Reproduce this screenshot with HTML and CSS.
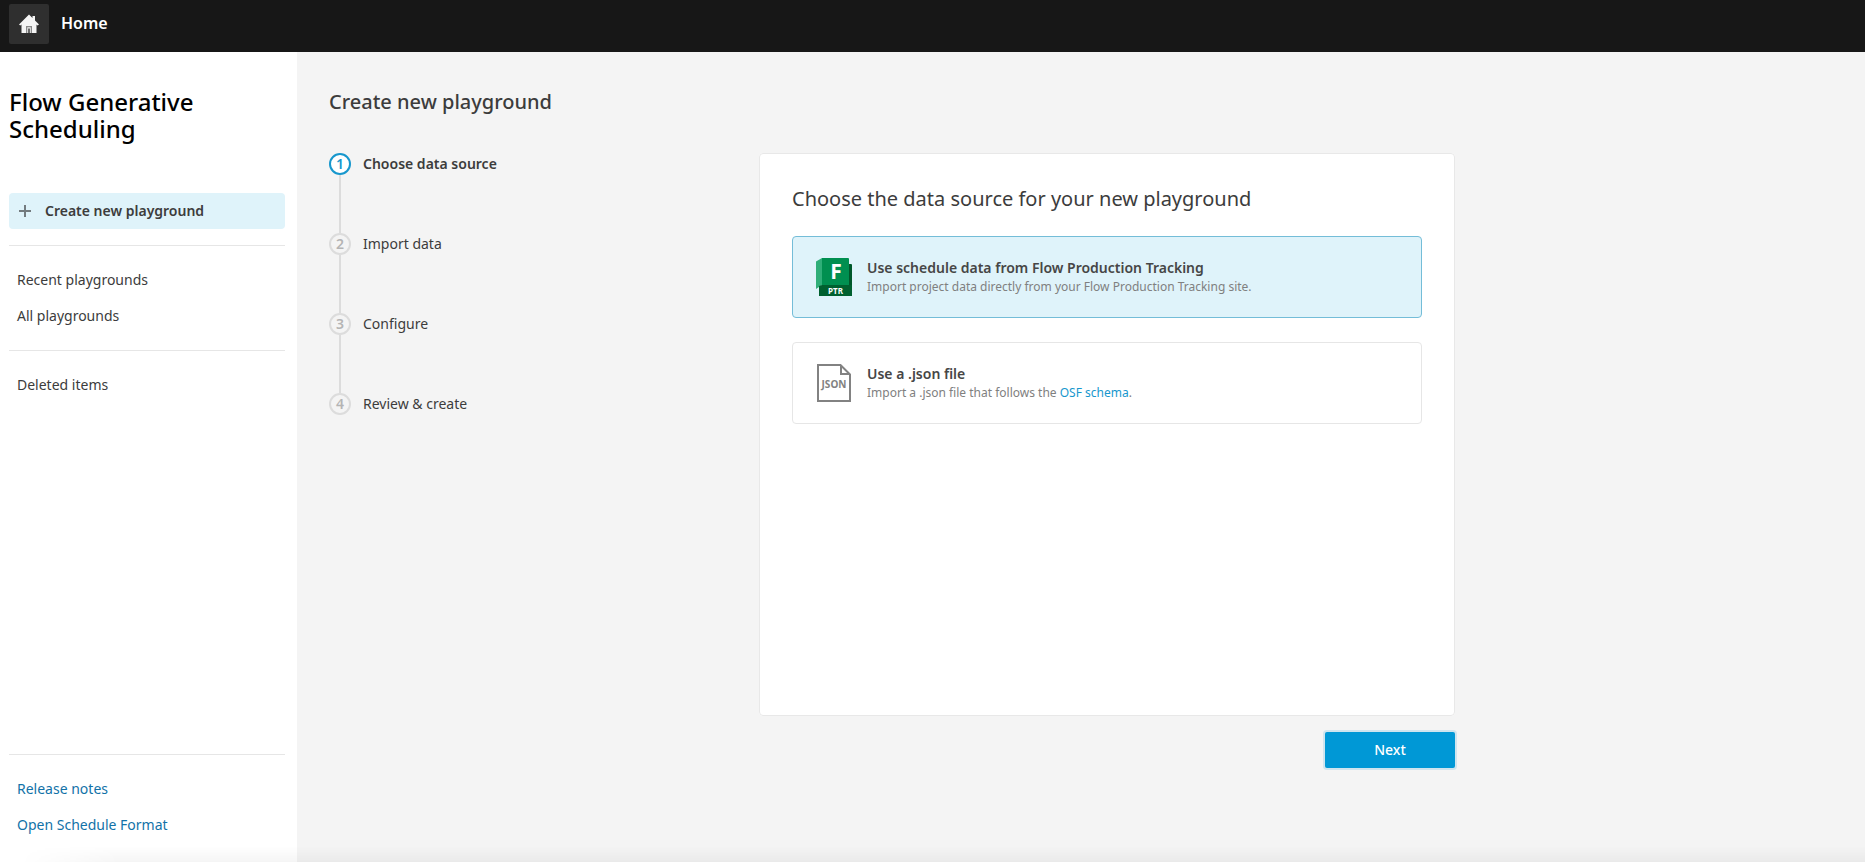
FILE: index.html
```html
<!DOCTYPE html>
<html lang="en">
<head>
<meta charset="utf-8">
<meta name="viewport" content="width=device-width, initial-scale=1">
<title>Flow Generative Scheduling</title>
<link rel="stylesheet" href="styles.css">
</head>
<body>
<header class="topbar">
  <a class="home-button" href="#" aria-label="Go to home">
    <svg width="20" height="20" viewBox="0 0 20 20" aria-hidden="true"><path fill="#f5f5f5" d="M10 0.500 L13.500 4 V2 H16 V6.500 L20 10.500 L18.500 11.500 L17.500 10.600 V19 H2.500 V10.600 L1.300 11.500 L0 10.500 Z"/><path fill="#8a8a8a" d="M7 12 H13 V19 H7 Z"/><path fill="#f5f5f5" d="M8.300 13.300 H11.700 V19 H8.300 Z"/><path fill="#2f2f2f" d="M9.300 14.500 H10.700 V19 H9.300 Z"/></svg>
  </a>
  <span class="topbar-title">Home</span>
</header>
<div class="shell">
  <aside class="sidebar">
    <h1 class="product-name">Flow Generative Scheduling</h1>
    <button class="create-button" type="button">
      <svg width="12" height="12" viewBox="0 0 12 12" aria-hidden="true"><path d="M6 0V12M0 6H12" stroke="#737b7f" stroke-width="2"/></svg>
      Create new playground
    </button>
    <nav class="nav">
      <div class="nav-group">
        <a class="nav-item" href="#">Recent playgrounds</a>
        <a class="nav-item" href="#">All playgrounds</a>
      </div>
      <div class="nav-group">
        <a class="nav-item" href="#">Deleted items</a>
      </div>
    </nav>
    <div class="nav-group nav-footer">
      <a class="nav-item nav-link" href="#">Release notes</a>
      <a class="nav-item nav-link" href="#">Open Schedule Format</a>
    </div>
  </aside>
  <main class="content">
    <h2 class="page-title">Create new playground</h2>
    <div class="wizard">
      <ol class="steps">
        <li class="step step-current" aria-current="step"><span class="step-number">1</span>Choose data source</li>
        <li class="step"><span class="step-number">2</span>Import data</li>
        <li class="step"><span class="step-number">3</span>Configure</li>
        <li class="step"><span class="step-number">4</span>Review &amp; create</li>
      </ol>
      <form class="wizard-form">
        <fieldset class="panel">
          <legend class="panel-title">Choose the data source for your new playground</legend>
          <label class="option">
            <input class="option-radio" type="radio" name="source" checked>
            <svg class="option-icon" width="36" height="38" viewBox="0 0 36 38" aria-hidden="true">
              <path fill="#00582a" d="M8 6H35Q36 6 36 7V38H8Z"/>
              <path fill="#2fae78" d="M0 3.500L6 0V27L0 31Z"/>
              <path fill="#008f50" d="M6 0H32Q33 0 33 1V27H6Z"/>
              <path fill="#00602f" d="M3 28L6 27H36V38H3Z"/>
              <text class="ptr-letter" x="20" y="21">F</text>
              <text class="ptr-code" x="19.500" y="35.500">PTR</text>
            </svg>
            <span class="option-text">
              <span class="option-title">Use schedule data from Flow Production Tracking</span>
              <span class="option-note">Import project data directly from your Flow Production Tracking site.</span>
            </span>
          </label>
          <label class="option">
            <input class="option-radio" type="radio" name="source">
            <svg class="option-icon" width="36" height="38" viewBox="0 0 36 38" aria-hidden="true">
              <path fill="#fff" stroke="#828282" stroke-width="2" d="M2 1H24.500L34 10.500V37H2Z"/>
              <path fill="none" stroke="#828282" stroke-width="2" d="M25 1.500V10H33.500"/>
              <text class="json-code" x="18" y="24">JSON</text>
            </svg>
            <span class="option-text">
              <span class="option-title">Use a .json file</span>
              <span class="option-note">Import a .json file that follows the <a class="option-link" href="#">OSF schema</a>.</span>
            </span>
          </label>
        </fieldset>
        <button class="next-button" type="button">Next</button>
      </form>
    </div>
  </main>
</div>
<div class="bottom-shade"></div>
</body>
</html>
```

FILE: styles.css
```css
* {
  box-sizing: border-box;
}

body {
  margin: 0;
  min-height: 100vh;
  display: flex;
  flex-direction: column;
  background: #f4f4f4;
  color: #3c3c3c;
  font: 14px/20px "Noto Sans", sans-serif;
}

a {
  color: inherit;
  text-decoration: none;
}

button {
  font: inherit;
  color: inherit;
  border: 0;
  cursor: pointer;
}

.topbar {
  display: flex;
  align-items: flex-start;
  gap: 12px;
  padding: 4px 9px 8px;
  background: #171717;
}

.home-button {
  display: flex;
  align-items: center;
  justify-content: center;
  width: 40px;
  height: 40px;
  border-radius: 2px;
  background: #2f2f2f;
}

.topbar-title {
  color: #fff;
  font-size: 16px;
  font-weight: 600;
  line-height: 38px;
}

.shell {
  flex: 1;
  display: flex;
}

.sidebar {
  flex: none;
  width: 297px;
  display: flex;
  flex-direction: column;
  padding: 36px 12px 19px 9px;
  background: #fff;
}

.product-name {
  margin: 0 0 51px;
  color: #000;
  font-size: 24px;
  line-height: 27px;
  font-weight: 500;
}

.create-button {
  display: flex;
  align-items: center;
  gap: 14px;
  height: 36px;
  margin-bottom: 16px;
  padding: 0 10px;
  border-radius: 4px;
  background: #dff3fa;
  font-weight: 600;
}

.nav-group {
  display: flex;
  flex-direction: column;
  padding: 16px 0;
  border-top: 1px solid #e6e6e6;
}

.nav-item {
  padding: 8px;
}

.nav-link {
  color: #1272a8;
}

.nav-footer {
  margin-top: auto;
  padding-bottom: 0;
}

.content {
  flex: 1;
  min-width: 0;
  padding: 36px 32px 48px;
}

.page-title {
  margin: 0 0 37px;
  font-size: 20px;
  line-height: 28px;
  font-weight: 500;
}

.wizard {
  display: grid;
  grid-template-columns: minmax(200px, 430px) minmax(0, 696px);
}

.steps {
  margin: 0;
  padding: 0;
  list-style: none;
}

.step {
  display: flex;
  gap: 12px;
  height: 80px;
  line-height: 22px;
  background: linear-gradient(#dcdcdc, #dcdcdc) 10px 22px / 2px 58px no-repeat;
}

.step:last-child {
  height: 22px;
  background: none;
}

.step-number {
  width: 22px;
  height: 22px;
  border: 2px solid #dcdcdc;
  border-radius: 50%;
  color: #b4b4b4;
  font-weight: 600;
  line-height: 18px;
  text-align: center;
}

.step-current {
  font-weight: 600;
}

.step-current .step-number {
  border-color: #1797cd;
  background: #fff;
  color: #1797cd;
}

.wizard-form {
  display: flex;
  flex-direction: column;
  align-items: flex-end;
  gap: 16px;
}

.panel {
  width: 100%;
  min-width: 0;
  min-height: 563px;
  margin: 0;
  padding: 31px 32px;
  border: 1px solid #e8e8e8;
  border-radius: 4px;
  background: #fff;
}

.panel-title {
  float: left;
  width: 100%;
  margin-bottom: 23px;
  padding: 0;
  font-size: 20px;
  line-height: 28px;
}

.option {
  clear: both;
  display: flex;
  align-items: center;
  gap: 15px;
  min-height: 82px;
  margin-bottom: 24px;
  padding: 8px 23px;
  border: 1px solid #e6e6e6;
  border-radius: 4px;
  background: #fff;
  cursor: pointer;
}

.option:has(:checked) {
  border-color: #74bdd8;
  background: #dff3fa;
}

.option-radio {
  position: absolute;
  opacity: 0;
}

.option-icon {
  flex: none;
}

.option-text {
  display: flex;
  flex-direction: column;
}

.option-title {
  color: #464646;
  line-height: 20px;
  font-weight: 600;
}

.option-note {
  color: #808080;
  font-size: 12px;
  line-height: 18px;
}

.option-link {
  color: #1797cd;
}

.ptr-letter,
.ptr-code,
.json-code {
  fill: #fff;
  font-weight: 700;
  text-anchor: middle;
}

.ptr-letter {
  font-size: 21px;
}

.ptr-code {
  font-size: 8px;
}

.json-code {
  fill: #828282;
  font-size: 10px;
}

.next-button {
  width: 130px;
  height: 36px;
  border-radius: 2px;
  background: #0098d6;
  box-shadow: 0 0 0 2px #cfe5ef;
  color: #fff;
  font-weight: 500;
}

.bottom-shade {
  position: fixed;
  right: 0;
  bottom: 0;
  left: 0;
  height: 16px;
  background: linear-gradient(transparent, rgba(0, 0, 0, 0.04));
  mask-image: linear-gradient(to right, transparent 20px, #000 120px);
  pointer-events: none;
}
```
